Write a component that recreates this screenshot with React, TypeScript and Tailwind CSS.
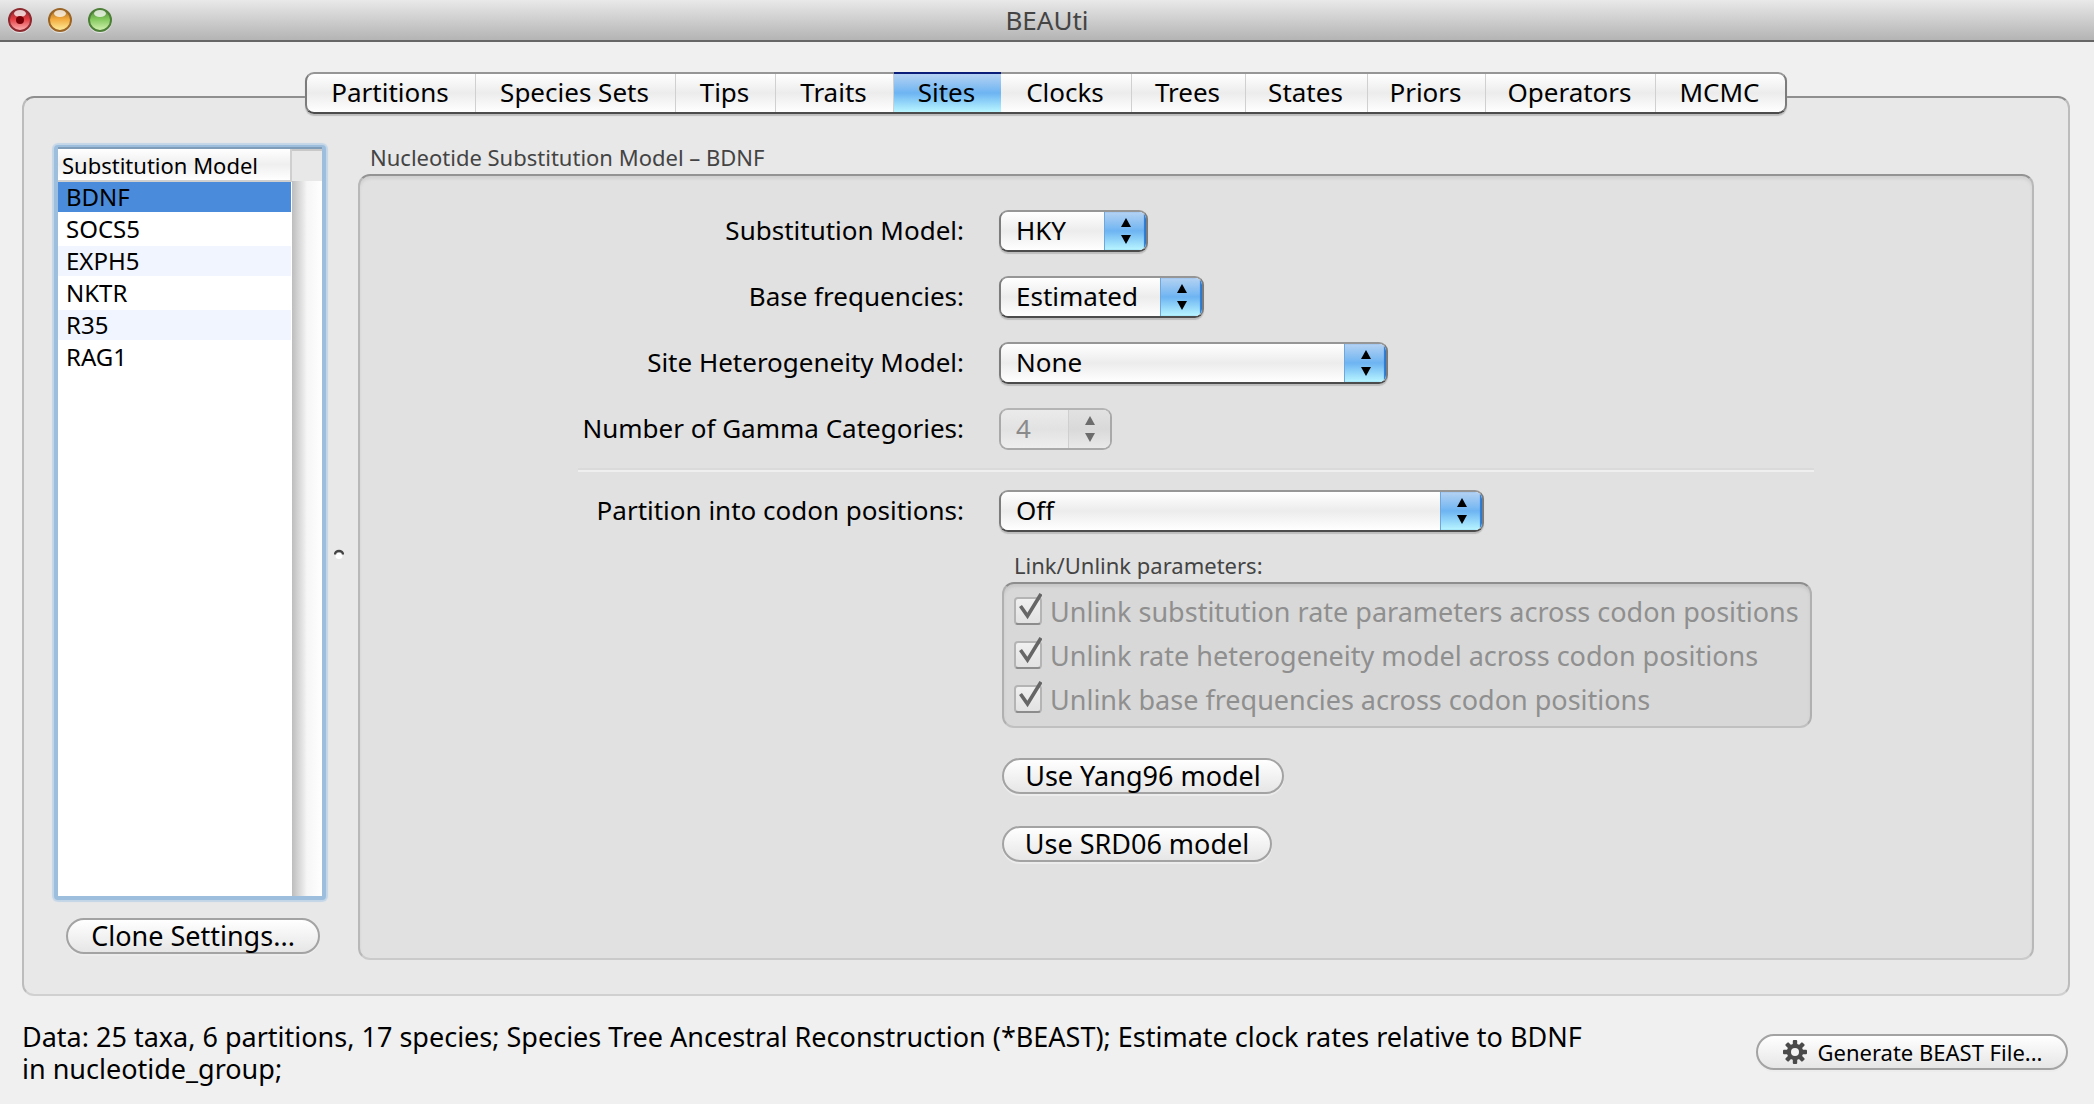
import { useState, type ReactNode } from "react";

const tabs = [
  { label: "Partitions", width: "w-[169px]" },
  { label: "Species Sets", width: "w-[200px]" },
  { label: "Tips", width: "w-[100px]" },
  { label: "Traits", width: "w-[118px]" },
  { label: "Sites", width: "w-[107px]" },
  { label: "Clocks", width: "w-[131px]" },
  { label: "Trees", width: "w-[114px]" },
  { label: "States", width: "w-[122px]" },
  { label: "Priors", width: "w-[118px]" },
  { label: "Operators", width: "w-[170px]" },
  { label: "MCMC", width: "w-[129px]" },
];

const models = ["BDNF", "SOCS5", "EXPH5", "NKTR", "R35", "RAG1"];

const unlinkOptions = [
  "Unlink substitution rate parameters across codon positions",
  "Unlink rate heterogeneity model across codon positions",
  "Unlink base frequencies across codon positions",
];

function Light({ from, to, rim, dot }: { from: string; to: string; rim: string; dot?: boolean }) {
  return (
    <svg viewBox="0 0 26 26" className="size-[26px]" aria-hidden="true">
      <defs>
        <linearGradient id={"light" + rim.slice(1)} x1="0" y1="0" x2="0" y2="1">
          <stop offset="0" stopColor={rim} />
          <stop offset="0.45" stopColor={from} />
          <stop offset="1" stopColor={to} />
        </linearGradient>
      </defs>
      <circle cx="13" cy="14" r="12" fill="#e6e6e6" />
      <circle cx="13" cy="13" r="11" fill={"url(#light" + rim.slice(1) + ")"} stroke={rim} strokeWidth="2" />
      <ellipse cx="13" cy="6.5" rx="6" ry="3.5" fill="#fff" opacity="0.75" />
      {dot && <circle cx="13" cy="13" r="4" fill="#7a0008" />}
    </svg>
  );
}

function Arrows() {
  return (
    <svg viewBox="0 0 10 26" className="h-[26px] w-[10px]" fill="currentColor" aria-hidden="true">
      <path d="M5 0 10 9H0z" />
      <path d="M5 26 0 17h10z" />
    </svg>
  );
}

function Popup({ id, value, width, disabled }: { id: string; value: string; width: string; disabled?: boolean }) {
  return (
    <div
      className={
        "relative h-[42px] overflow-hidden rounded-[9px] border-2 " +
        width +
        (disabled
          ? " border-[#a9a9a9] border-t-[#b4b4b4] text-[#8a8a8a]"
          : " border-t-[#969696] border-x-[#7c7c7c] border-b-[#4c4c4c] text-black shadow-[0_2px_1px_#bdbdbd]")
      }
    >
      <select
        id={id}
        disabled={disabled}
        defaultValue={value}
        className={
          "h-full w-full appearance-none pr-12 pb-[2px] pl-[15px] text-[26px] opacity-100 outline-none " +
          (disabled
            ? "bg-linear-to-b from-[#ebebeb] via-[#e2e2e2] to-[#eeeeee]"
            : "bg-linear-to-b from-white via-[#ececec] to-white")
        }
      >
        <option>{value}</option>
      </select>
      <span
        className={
          "pointer-events-none absolute inset-y-0 right-0 flex w-[42px] items-center justify-center border-l " +
          (disabled
            ? "border-[#cfcfcf] bg-linear-to-b from-[#e2e2e2] via-[#d9d9d9] to-[#e9e9e9] text-[#6c6c6c]"
            : "border-[#6fa6dc] bg-linear-to-b from-[#b4d2f2] from-0% via-[#6db4f2] via-50% to-[#b9f6ff] text-black shadow-[inset_-2px_0_1px_#2c78cf]")
        }
      >
        <Arrows />
      </span>
      {!disabled && <span className="pointer-events-none absolute -top-[2px] -right-[2px] h-[2px] w-[44px] bg-[#0a1d78]" />}
    </div>
  );
}

function Row({ id, label, children }: { id: string; label: string; children: ReactNode }) {
  return (
    <div className="flex items-center">
      <label htmlFor={id} className="mr-[35px] w-[386px] pb-[2px] text-right text-[26px] whitespace-nowrap">
        {label}
      </label>
      {children}
    </div>
  );
}

function PushButton({ children, className }: { children: ReactNode; className: string }) {
  return (
    <button
      type="button"
      className={
        "flex h-[36px] items-center justify-center rounded-[18px] border-2 border-[#a3a3a3] bg-linear-to-b from-white to-[#e6e6e6] whitespace-nowrap shadow-[0_2px_0_#ececec] " +
        className
      }
    >
      {children}
    </button>
  );
}

function Gear() {
  return (
    <svg viewBox="0 0 26 26" className="size-[26px]" aria-hidden="true">
      <g fill="#4a4a4a">
        {[0, 45, 90, 135].map((angle) => (
          <rect key={angle} x="10.8" y="1" width="4.4" height="24" rx="1" transform={"rotate(" + angle + " 13 13)"} />
        ))}
        <circle cx="13" cy="13" r="8.2" />
      </g>
      <circle cx="13" cy="13" r="4" fill="#f2f2f2" />
    </svg>
  );
}

export default function App() {
  const [tab, setTab] = useState("Sites");
  const [model, setModel] = useState("BDNF");
  return (
    <div className="flex min-h-screen flex-col bg-[#f0f0f0] font-['Noto_Sans',sans-serif] text-[27px] leading-8 text-black">
      <header className="flex h-[42px] items-center border-b-2 border-[#666] bg-linear-to-b from-[#e9e9e9] to-[#b4b4b4] px-[7px]">
        <div className="flex flex-1 gap-[14px]">
          <Light from="#e23b40" to="#ffb9b9" rim="#8c2a30" dot />
          <Light from="#f2a93c" to="#fff0a0" rim="#9a6526" />
          <Light from="#82c75c" to="#d6f5b4" rim="#4d7f38" />
        </div>
        <h1 className="text-[26px] text-[#444]">BEAUti</h1>
        <div className="flex-1" />
      </header>

      <main className="flex flex-1 flex-col pr-[24px] pl-[22px]">
        <nav className="z-10 mt-[30px] flex justify-center">
          <div
            role="tablist"
            className="flex h-[42px] rounded-[9px] border-2 border-t-[#969696] border-x-[#7c7c7c] border-b-[#4c4c4c] bg-linear-to-b from-white via-[#ececec] to-white shadow-[0_2px_1px_#bdbdbd]"
          >
            {tabs.map((t, i) => (
              <button
                key={t.label}
                type="button"
                role="tab"
                aria-selected={tab === t.label}
                onClick={() => setTab(t.label)}
                className={
                  "pr-[2px] pb-[2px] text-center text-[26px] whitespace-nowrap " +
                  t.width +
                  (tab === t.label
                    ? " -mt-[2px] border-t-2 border-[#0a1d78] bg-linear-to-b from-[#b4d2f2] via-[#6db4f2] to-[#b9f6ff]"
                    : i < tabs.length - 1
                      ? " border-r border-[#d0d0d0]"
                      : "")
                }
              >
                {t.label}
              </button>
            ))}
          </div>
        </nav>

        <section className="-mt-[18px] flex flex-1 rounded-[12px] border-2 border-t-[#8f8f8f] border-x-[#bcbcbc] border-b-[#d0d0d0] bg-[#e8e8e8] pt-[44px] pr-[34px] pb-[34px] pl-[30px]">
          <div className="flex w-[272px] flex-col pt-[3px] pb-[6px]">
            <div className="flex flex-1 flex-col rounded-[4px] border-4 border-t-2 border-[#9dbfdd] bg-white shadow-[0_0_1px_2px_#c3d6e8]">
              <div className="flex flex-1 border-t-2 border-[#7f9db8]">
                <table className="w-[234px] self-start">
                  <thead>
                    <tr>
                      <th className="h-[32px] border-r-2 border-b-2 border-[#cfcfcf] bg-linear-to-b from-white via-[#efefef] to-white pl-[4px] text-left text-[22px] leading-[28px] font-normal whitespace-nowrap">
                        Substitution Model
                      </th>
                    </tr>
                  </thead>
                  <tbody>
                    {models.map((m, i) => (
                      <tr
                        key={m}
                        onClick={() => setModel(m)}
                        className={
                          "border-b-2 border-white " +
                          (m === model ? "bg-[#4a8cdb]" : i % 2 === 0 ? "bg-[#f0f5ff]" : "bg-white")
                        }
                      >
                        <td className="h-[32px] pl-[8px] text-[24px] leading-[30px]">{m}</td>
                      </tr>
                    ))}
                  </tbody>
                </table>
                <div className="flex flex-1 flex-col">
                  <div className="h-[32px] border-t-2 border-[#c8c8c8] bg-[#e8e8e8]" />
                  <div className="flex-1 bg-linear-to-r from-[#bdbdbd] via-[#f6f6f6] via-50% to-white" />
                </div>
              </div>
            </div>
            <PushButton className="mt-[18px] ml-[12px] w-[254px]">Clone Settings...</PushButton>
          </div>

          <div className="flex w-[32px] items-center justify-center pt-[6px] pr-[6px]">
            <svg viewBox="0 0 10 10" className="h-[10px] w-[10px]" aria-hidden="true">
              <ellipse cx="5" cy="7" rx="3.5" ry="3" fill="#fff" />
              <path d="M1 5.5a4 3.5 0 0 1 8 0" fill="none" stroke="#444" strokeWidth="2.4" />
            </svg>
          </div>

          <div className="flex flex-1 flex-col">
            <h2 className="h-8 pl-[12px] text-[22px] leading-[30px] text-[#444]">Nucleotide Substitution Model – BDNF</h2>
            <div className="flex-1 rounded-[12px] border-2 border-t-[#939393] border-x-[#b8b8b8] border-b-[#cacaca] bg-[#e1e1e1] pt-[34px] shadow-[inset_0_3px_3px_#d2d2d2]">
              <form className="mx-auto w-[1236px]">
                <div className="flex flex-col gap-6">
                  <Row id="substitution" label="Substitution Model:">
                    <Popup id="substitution" value="HKY" width="w-[149px]" />
                  </Row>
                  <Row id="frequencies" label="Base frequencies:">
                    <Popup id="frequencies" value="Estimated" width="w-[205px]" />
                  </Row>
                  <Row id="heterogeneity" label="Site Heterogeneity Model:">
                    <Popup id="heterogeneity" value="None" width="w-[389px]" />
                  </Row>
                  <Row id="gamma" label="Number of Gamma Categories:">
                    <Popup id="gamma" value="4" width="w-[113px]" disabled />
                  </Row>
                </div>
                <hr className="my-[18px] h-[4px] border-t-2 border-b-2 border-t-[#dadada] border-b-[#efefef]" />
                <Row id="codon" label="Partition into codon positions:">
                  <Popup id="codon" value="Off" width="w-[485px]" />
                </Row>
                <fieldset className="mt-[18px] ml-[424px] w-[810px]">
                  <legend className="pl-[12px] text-[22px] leading-[30px] text-[#444] pb-[2px]">Link/Unlink parameters:</legend>
                  <div className="rounded-[12px] border-2 border-t-[#8d8d8d] border-x-[#b0b0b0] border-b-[#c0c0c0] bg-[#d8d8d8] py-[5px] pl-[10px] shadow-[inset_0_3px_3px_#c8c8c8]">
                    {unlinkOptions.map((o) => (
                      <label key={o} className="flex h-[44px] items-center gap-[8px] whitespace-nowrap text-[#8f8f8f]">
                        <span className="relative size-[28px]">
                          <input
                            type="checkbox"
                            defaultChecked
                            disabled
                            className="block size-[28px] appearance-none rounded-[4px] border-2 border-[#b4b4b4] border-b-[#8c8c8c] bg-linear-to-b from-[#f0f0f0] to-[#e2e2e2]"
                          />
                          <svg viewBox="0 0 28 32" className="pointer-events-none absolute -top-[4px] left-0 h-[32px] w-[28px]" aria-hidden="true">
                            <path d="M6.5 13 13.5 23 27 1" fill="none" stroke="#666" strokeWidth="3.6" />
                          </svg>
                        </span>
                        <span className="pt-[2px]">{o}</span>
                      </label>
                    ))}
                  </div>
                </fieldset>
                <div className="mt-[30px] ml-[424px] flex flex-col gap-8">
                  <PushButton className="w-[282px]">Use Yang96 model</PushButton>
                  <PushButton className="w-[270px]">Use SRD06 model</PushButton>
                </div>
              </form>
            </div>
          </div>
        </section>
      </main>

      <footer className="flex h-[108px] items-start justify-between pr-[26px] pl-[22px]">
        <p className="mt-[25px]">
          Data: 25 taxa, 6 partitions, 17 species; Species Tree Ancestral Reconstruction (*BEAST); Estimate clock rates relative to BDNF
          <br />
          in nucleotide_group;
        </p>
        <PushButton className="mt-[38px] w-[312px] gap-[10px] text-[22px]">
          <Gear />
          Generate BEAST File...
        </PushButton>
      </footer>
    </div>
  );
}
